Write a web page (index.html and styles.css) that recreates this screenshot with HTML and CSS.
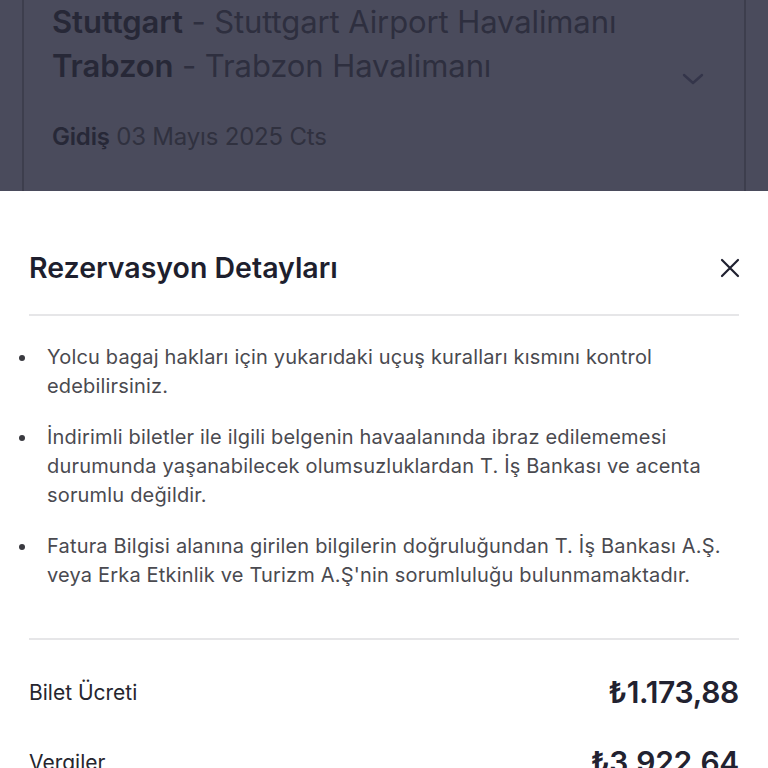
FILE: index.html
```html
<!DOCTYPE html>
<html lang="tr">
<head>
<meta charset="utf-8">
<link rel="stylesheet" href="styles.css">
</head>
<body>
<div class="backdrop">
  <div class="card">
    <div class="route">
      <div class="lines">
        <div class="line"><b>Stuttgart</b> - Stuttgart Airport Havalimanı</div>
        <div class="line"><b>Trabzon</b> - Trabzon Havalimanı</div>
      </div>
      <svg class="chev" width="22" height="14" viewBox="0 0 22 14"><path d="M2 3 L11 11 L20 3" fill="none" stroke="#34354a" stroke-width="2.4" stroke-linecap="round" stroke-linejoin="round"/></svg>
    </div>
    <div class="date"><b>Gidiş</b> 03 Mayıs 2025 Cts</div>
  </div>
</div>
<div class="sheet">
  <div class="head">
    <h2 class="title">Rezervasyon Detayları</h2>
    <svg class="close" width="20" height="20" viewBox="0 0 20 20"><path d="M2 2 L18 18 M18 2 L2 18" stroke="#1f2030" stroke-width="2.2" stroke-linecap="round"/></svg>
  </div>
  <div class="divider"></div>
  <ul class="notes">
    <li>Yolcu bagaj hakları için yukarıdaki uçuş kuralları kısmını kontrol edebilirsiniz.</li>
    <li>İndirimli biletler ile ilgili belgenin havaalanında ibraz edilememesi durumunda yaşanabilecek olumsuzluklardan T. İş Bankası ve acenta sorumlu değildir.</li>
    <li>Fatura Bilgisi alanına girilen bilgilerin doğruluğundan T. İş Bankası A.Ş. veya Erka Etkinlik ve Turizm A.Ş'nin sorumluluğu bulunmamaktadır.</li>
  </ul>
  <div class="divider"></div>
  <div class="rows">
    <div class="row"><span class="label">Bilet Ücreti</span><span class="amount">₺1.173,88</span></div>
    <div class="row"><span class="label">Vergiler</span><span class="amount">₺3.922,64</span></div>
  </div>
</div>
</body>
</html>
```

FILE: styles.css
```css
* { box-sizing: border-box; }
html, body { margin: 0; padding: 0; }
body {
  width: 768px;
  height: 768px;
  overflow: hidden;
  font-family: Inter, "Noto Sans", sans-serif;
  background: #4a4b5c;
}
.backdrop {
  height: 191px;
  padding: 0 22px;
  background: #4a4b5c;
}
.card {
  height: 191px;
  border-left: 2px solid #3d3e4d;
  border-right: 2px solid #3d3e4d;
  padding: 0 0 0 28px;
}
.route {
  display: flex;
  align-items: flex-end;
  justify-content: space-between;
  padding-right: 40px;
}
.lines { padding-top: 0; }
.line {
  font-size: 31px;
  line-height: 44px;
  color: #2e2f3f;
  letter-spacing: -0.1px;
}
.line b { font-weight: 600; color: #272837; }
.chev { margin-bottom: 2px; }
.date {
  margin-top: 34px;
  font-size: 24px;
  color: #30313f;
  letter-spacing: -0.2px;
}
.date b { font-weight: 600; color: #272837; }
.sheet {
  background: #fff;
  height: 577px;
  padding: 0 29px;
}
.head {
  display: flex;
  align-items: center;
  justify-content: space-between;
  height: 123px;
  padding-top: 30px;
}
.title {
  margin: 0;
  font-size: 28.5px;
  font-weight: 600;
  color: #1e1f2e;
  letter-spacing: 0;
}
.close { margin-right: -1px; }
.divider {
  height: 2px;
  background: #e6e6e8;
}
.notes {
  margin: 0;
  padding: 27px 0 48px 18px;
  list-style: none;
}
.notes li {
  position: relative;
  font-size: 20px;
  line-height: 29px;
  color: #4a4a50;
  letter-spacing: 0.18px;
  margin-bottom: 22px;
}
.notes li:last-child { margin-bottom: 0; }
.notes li::before {
  content: "";
  position: absolute;
  left: -28px;
  top: 12px;
  width: 6px;
  height: 6px;
  border-radius: 50%;
  background: #3a3a40;
}
.rows { padding-top: 30px; }
.row {
  display: flex;
  justify-content: space-between;
  align-items: center;
  height: 44px;
  margin-bottom: 26px;
}
.label {
  font-size: 21px;
  color: #26262e;
}
.amount {
  font-size: 30px;
  font-weight: 600;
  color: #222230;
  letter-spacing: -0.3px;
}
```
